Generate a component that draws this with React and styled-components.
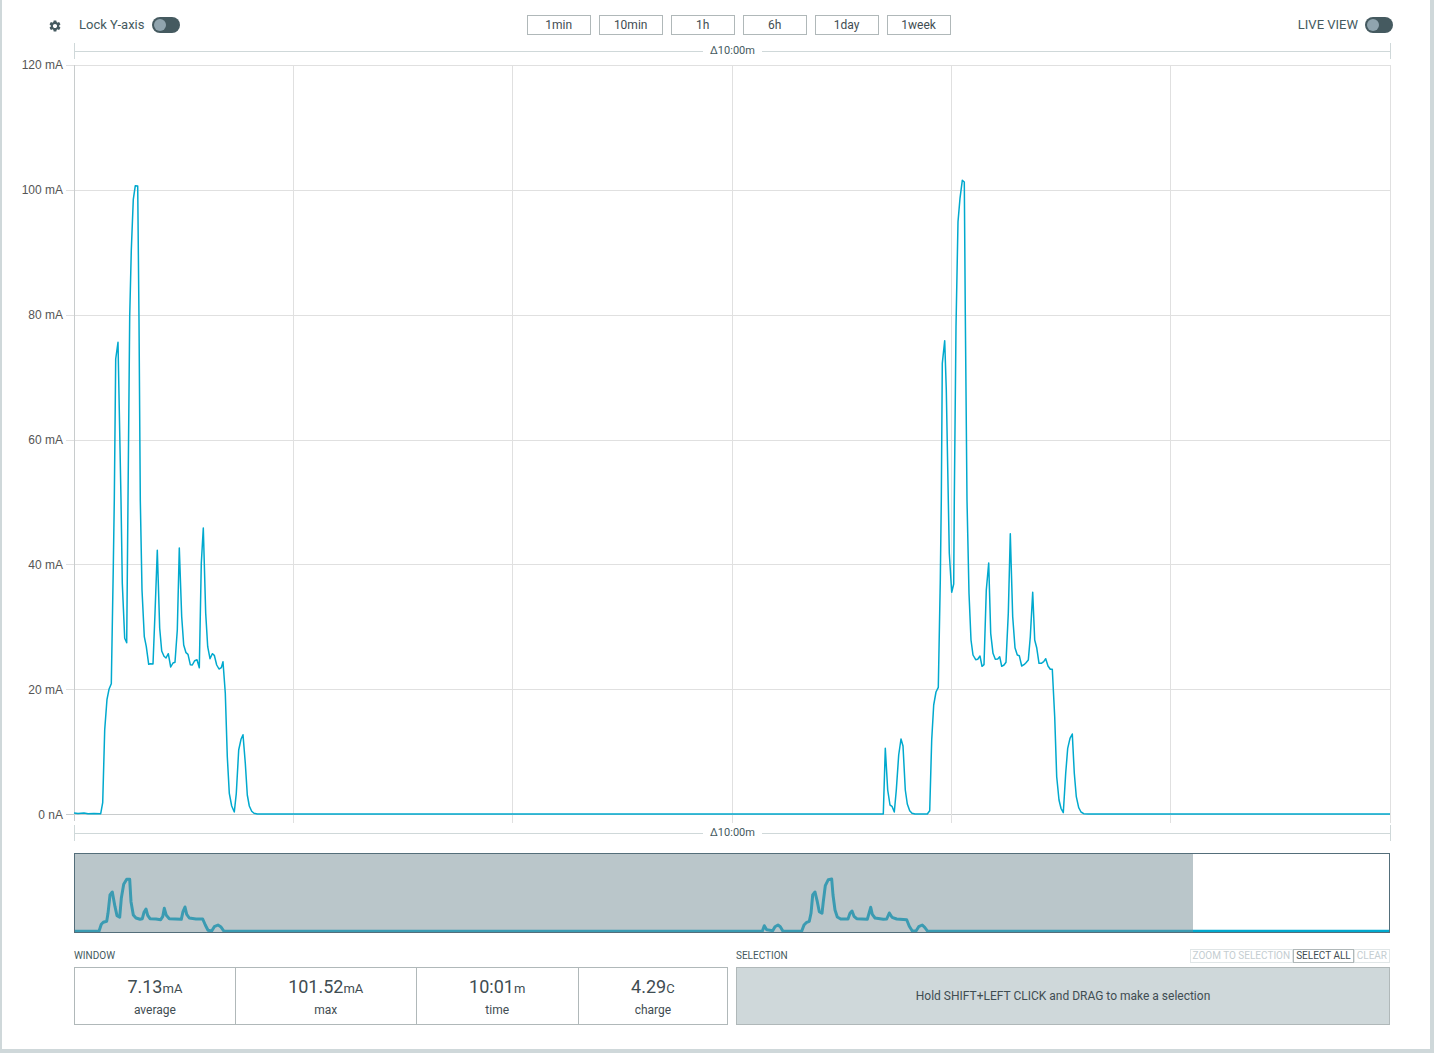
import React, { useState } from "react";
import styled, { createGlobalStyle } from "styled-components";
import { MdSettings } from "react-icons/md";

const color = {
  frame: "#cfd8da",
  ink: "#455a60",
  inkDark: "#3f4d52",
  grid: "#e0e0e0",
  ruler: "#cfd8d9",
  border: "#b0b8b9",
  line: "#00a9ce",
  muted: "#c4cdd1",
};

const GlobalStyle = createGlobalStyle`
  *, *::before, *::after { box-sizing: border-box; }
  body {
    margin: 0;
    background: #fff;
    color: ${color.ink};
    font-family: Roboto, "Liberation Sans", sans-serif;
    font-size: 12px;
  }
`;

const Page = styled.main`
  display: flex;
  flex-direction: column;
  min-height: 100vh;
  padding-bottom: 24px;
  border: solid ${color.frame};
  border-width: 0 4px 4px 2px;
`;

const Toolbar = styled.header`
  display: flex;
  align-items: center;
  justify-content: space-between;
  padding: 15px 37px 0 46px;
  margin-bottom: 8px;
`;

const Group = styled.div`
  display: flex;
  align-items: center;
  gap: ${(p) => p.$gap || 8}px;
`;

const IconButton = styled.button`
  display: flex;
  padding: 2px 0 0;
  border: 0;
  background: none;
  color: ${color.ink};
`;

const SwitchLabel = styled.label`
  display: flex;
  align-items: center;
  gap: 7px;
  height: 20px;
  font-size: 13px;
  line-height: 20px;
`;

const Switch = styled.input`
  appearance: none;
  width: 28px;
  height: 16px;
  margin: 0;
  padding: 2px;
  border-radius: 8px;
  background: ${color.ink};

  &::before {
    content: "";
    display: block;
    width: 12px;
    height: 12px;
    border-radius: 50%;
    background: #90a4ae;
  }
  &:checked::before {
    margin-left: 12px;
  }
`;

const RangeButton = styled.button`
  width: 64px;
  height: 20px;
  padding: 0;
  border: 1px solid ${color.border};
  background: #fff;
  color: ${color.inkDark};
  font: 12px/18px Roboto, sans-serif;
`;

const Ruler = styled.div`
  display: flex;
  align-items: center;
  gap: 7px;
  height: 16px;
  margin: 0 39px 0 72px;
  border: solid ${color.ruler};
  border-width: 0 1px;
  font-size: 11px;
  line-height: 14px;

  &::before,
  &::after {
    content: "";
    flex: 1;
    height: 1px;
    margin-top: 1px;
    background: ${color.ruler};
  }
`;

const ChartRow = styled.section`
  display: flex;
  flex: 1;
  min-height: 320px;
  margin: 6px 39px 2px 0;
`;

const Axis = styled.ol`
  display: flex;
  flex-direction: column;
  justify-content: space-between;
  width: 64px;
  margin: -8px 0 0;
  padding: 0 3px 0 0;
  list-style: none;
  color: #555;
  font: 12px/16px "Liberation Sans", Arial, sans-serif;
  text-align: right;
`;

const PlotBox = styled.div`
  position: relative;
  flex: 1;
`;

const Plot = styled.svg`
  position: absolute;
  width: 100%;
  height: 100%;
`;

const Overview = styled.section`
  position: relative;
  height: 80px;
  margin: 12px 40px 0 72px;
  border: 1px solid #546e7a;
`;

const OverviewSelection = styled.div`
  position: absolute;
  inset: 0 auto 0 0;
  width: 85.1%;
  background: rgba(117, 141, 149, 0.5);
`;

const Summary = styled.div`
  display: grid;
  grid-template-columns: 1fr 1fr;
  gap: 8px;
  margin: 16px 40px 0 72px;
`;

const PanelHead = styled.div`
  display: flex;
  align-items: center;
  justify-content: space-between;
  height: 14px;
  margin-bottom: 4px;
`;

const PanelTitle = styled.h2`
  margin: 0;
  font-size: 10px;
  font-weight: 400;
  line-height: 16px;
`;

const Actions = styled.div`
  display: flex;
`;

const ActionButton = styled.button`
  height: 14px;
  padding: 0 2px;
  border: 1px solid ${color.border};
  background: #fff;
  color: ${color.inkDark};
  font: 10px/12px Roboto, sans-serif;

  &:disabled {
    border-color: #e0e6e7;
    color: ${color.muted};
  }
`;

const Stats = styled.dl`
  display: flex;
  height: 58px;
  margin: 0;
  border: 1px solid ${color.border};
`;

const Stat = styled.div`
  display: flex;
  flex: 1 1 auto;
  flex-direction: column-reverse;
  justify-content: flex-start;
  padding-bottom: 4px;
  text-align: center;

  &:not(:last-child) {
    border-right: 1px solid ${color.border};
  }
`;

const StatName = styled.dt`
  color: ${color.inkDark};
  font-size: 12px;
  line-height: 20px;
`;

const StatValue = styled.dd`
  margin: 0;
  color: ${color.inkDark};
  font-size: 18px;
  line-height: 22px;
`;

const Unit = styled.span`
  font-size: 13px;
`;

const Hint = styled.p`
  display: flex;
  align-items: center;
  justify-content: center;
  height: 58px;
  margin: 0;
  border: 1px solid ${color.border};
  background: ${color.frame};
  color: ${color.inkDark};
`;

const RANGES = ["1min", "10min", "1h", "6h", "1day", "1week"];
const TICKS = ["120 mA", "100 mA", "80 mA", "60 mA", "40 mA", "20 mA", "0 nA"];
const ROWS = [0.5, 125.5, 250.5, 375.5, 499.5, 624.5, 749.5];
const COLS = [219.5, 438.5, 658.5, 877.5, 1096.5, 1316.5];
const STATS = [
  ["average", "7.13", "mA"],
  ["max", "101.52", "mA"],
  ["time", "10:01", "m"],
  ["charge", "4.29", "C"],
];

const TRACE = `0,748 4,748.6 10,748 14,748.8 20,748.4 26.7,748.7 28.7,737.7 30.7,665 33,634.3 35,624.3 37.3,618.7 39.3,501.7
40.3,435 41.7,294 44,277.3 47,435 48.3,518.3 50.7,573.3 52.7,577.7 54,435 55.7,251.7 57.3,185 59.3,134.3
61.3,120.7 63.7,121 65,255 66.3,435 68,525 70.3,571.7 72.3,581.7 74.7,599.3 76.7,598.7 79,599 81,548.3
83.3,485.3 85.7,563.3 87.7,586 90,591.3 92,593 94.3,588.7 96.7,602 99,598 101,597.3 103.3,565 105.3,483
107.7,551.7 109.7,580 112,587.7 114,589.3 116.3,599.7 118.3,600 120.7,595.7 123,594.7 125.3,602.7 127.3,498.3
129.3,463 131.7,548.3 133.7,581.7 136,593.7 138.3,588.7 140.3,590.3 142.7,600 145,604 147.3,602.7 149,596.7
151.3,628.3 153.3,691.7 155.3,728.3 157.7,741 160.3,747 162.3,728.3 164.7,685 167,674.3 169,669.7 171.3,698.3
173.3,730 175.3,741 177.7,746.3 180,748.3 183.3,749 809.3,749 811.3,683.3 813.7,725 816,740 818,741.3
820.3,747 822.3,725 824.7,690 827,674 829,681 831.3,725 833.3,739 835.7,745.7 838,748.3 841,749 853.3,749
855.7,745.7 857.7,675 859.7,640 862,627 864.3,622.3 866.3,515 867.3,435 868.3,298.3 870.7,275.7 872.3,325
874.3,435 875.3,488.3 877.7,527.3 879.7,519 880.3,435 882,261.7 884,156.7 886,133.3 888.3,115.3 890.3,117
891.3,248.3 893,435 895,528.3 897,575 899,590 901.7,594.7 903.7,594.3 906,591 908,601.3 910,599.7 912.3,525
914.7,498 916.7,568.3 919,588.3 921.3,594.3 923.7,594 925.7,591.7 927.7,601.3 930,600 932,597.3 934.3,548.3
936.3,468.7 938.7,551.7 941,582.7 943.3,590 945.3,590.7 947.7,601 950,599.7 952,597.7 954.3,595 956.3,571.7
958.7,527.3 960.7,575 962.7,582.7 965,598.3 967.3,598.3 969.7,596.7 971.7,593.7 974,601 976.3,604.3
978.3,604.3 980.7,651.7 982.7,711.7 985,735 987,743.3 989.3,747.7 991.7,708.3 993.7,683.3 996,673.3
998.3,669 1000.3,708.3 1002.3,731.7 1004.7,742.7 1007,747 1009.7,748.7 1014.3,749 1316,749`;

const OVERVIEW_TRACE = `0,78.3 25,78.3 27.3,71.3 29.3,69.3 32.7,68.3 34,60.3 36,42 38.3,39 41,53.7 43,62.7 45.7,64.3
47.3,45.3 49.7,31.3 52.7,26.3 55.7,26.3 57,48.7 59.3,62 62,65 66,66.3 68.3,65.7 70,59.3 72,56 73.7,62.3
76,65.7 82,66 86.7,66.7 88.7,63.7 90.3,55.3 92.3,62.3 95.3,65.7 107.3,66.3 109,58.7 111,54 112.7,61.3
115.3,65 122,66 128.7,66 131.3,72 134,77.3 137.7,78 140.3,73.7 144,72 146.7,73.7 150,78.3 688.3,78.3
690.3,72.7 692.7,76.7 698.7,77.7 701,73.7 704,72 706.3,73.7 709,78.3 727.7,78.3 730,72 732.7,69.3 735.3,68.3
737,60.3 738.7,42 741,39 743.3,48.7 745.3,58.7 748,60.3 749.3,48.7 751.3,32.7 754.3,26.7 757.7,26 759,42
761,57 763.3,64 766.7,66 774,66 776,60.3 778,58 780,63.3 782.7,65.7 793.3,66.3 795,60.3 796.7,54.3 798.3,61.3
801,65 809.3,66.3 812.7,66 815.3,60 818,64.3 822.7,66 832.7,66.7 835.3,73.3 838.3,78 842,78 844.7,73.7
848.3,72 850.7,74.3 853.7,78.3 1316,78.3`;

function Toggle({ label }) {
  const [on, setOn] = useState(false);
  return (
    <SwitchLabel>
      {label}
      <Switch type="checkbox" role="switch" checked={on} onChange={() => setOn(!on)} />
    </SwitchLabel>
  );
}

function Chart() {
  return (
    <ChartRow>
      <Axis>
        {TICKS.map((t) => (
          <li key={t}>{t}</li>
        ))}
      </Axis>
      <PlotBox>
        <Plot viewBox="-8 0 1325 758" preserveAspectRatio="none" role="img" aria-label="Current over time">
          {ROWS.map((y) => (
            <line key={y} x1="-8" x2="1316" y1={y} y2={y} stroke={y > 749 ? "#c8cccd" : color.grid} />
          ))}
          {COLS.map((x) => (
            <line key={x} x1={x} x2={x} y1="0" y2="758" stroke={color.grid} />
          ))}
          <line x1="0.5" x2="0.5" y1="0" y2="756" stroke="#c8cccd" />
          <polyline
            points={TRACE}
            fill="none"
            stroke={color.line}
            strokeWidth="1.5"
            strokeLinejoin="round"
            vectorEffect="non-scaling-stroke"
          />
        </Plot>
      </PlotBox>
    </ChartRow>
  );
}

export default function App() {
  return (
    <>
      <GlobalStyle />
      <Page>
        <Toolbar>
          <Group $gap={17}>
            <IconButton aria-label="Settings">
              <MdSettings size={14} />
            </IconButton>
            <Toggle label="Lock Y-axis" />
          </Group>
          <Group>
            {RANGES.map((r) => (
              <RangeButton key={r}>{r}</RangeButton>
            ))}
          </Group>
          <Toggle label="LIVE VIEW" />
        </Toolbar>
        <Ruler>Δ10:00m</Ruler>
        <Chart />
        <Ruler>Δ10:00m</Ruler>
        <Overview>
          <Plot viewBox="1 1 1314 78" preserveAspectRatio="none" role="img" aria-label="Recording overview">
            <polyline
              points={OVERVIEW_TRACE}
              fill="none"
              stroke={color.line}
              strokeWidth="3"
              strokeLinejoin="round"
              vectorEffect="non-scaling-stroke"
            />
          </Plot>
          <OverviewSelection />
        </Overview>
        <Summary>
          <section>
            <PanelHead>
              <PanelTitle>WINDOW</PanelTitle>
            </PanelHead>
            <Stats>
              {STATS.map(([name, value, unit]) => (
                <Stat key={name}>
                  <StatName>{name}</StatName>
                  <StatValue>
                    {value}
                    <Unit>{unit}</Unit>
                  </StatValue>
                </Stat>
              ))}
            </Stats>
          </section>
          <section>
            <PanelHead>
              <PanelTitle>SELECTION</PanelTitle>
              <Actions>
                <ActionButton disabled>ZOOM TO SELECTION</ActionButton>
                <ActionButton>SELECT ALL</ActionButton>
                <ActionButton disabled>CLEAR</ActionButton>
              </Actions>
            </PanelHead>
            <Hint>Hold SHIFT+LEFT CLICK and DRAG to make a selection</Hint>
          </section>
        </Summary>
      </Page>
    </>
  );
}
